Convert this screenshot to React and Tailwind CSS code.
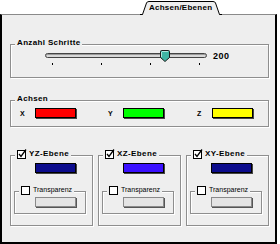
import React from 'react';

const Group = ({ className, label, children }) => (
    <div className={`relative border border-[#8e8e8e] shadow-[inset_1px_1px_0_#fff,1px_1px_0_#fff] ${className}`}>
        <div className="absolute left-[4px] -top-[8px] h-[11px] bg-[#eeeeee] px-[2px] flex items-center gap-[2px]">
            {label}
        </div>
        {children}
    </div>
);

const Check = ({ checked }) => (
    <svg width="10" height="10" viewBox="0 0 10 10" className="shrink-0">
        <rect x="0.5" y="1.5" width="8" height="8" fill="#fff" stroke="#000" />
        {checked && <path d="M2 5 L4 7.5 L9 0.5" fill="none" stroke="#000" strokeWidth="1.3" />}
    </svg>
);

const Swatch = ({ color }) => (
    <div className={`w-[41px] h-[10px] border border-black shadow-[1px_1px_0_#444] ${color}`} />
);

const Plane = ({ name, color }) => (
    <Group
        className="w-[83px] h-[71px]"
        label={
            <>
                <Check checked />
                <span className="text-[8px] font-bold tracking-[0.4px] leading-none">{name}</span>
            </>
        }
    >
        <div className="pl-[24px] pt-[7px]">
            <Swatch color={color} />
        </div>
        <Group
            className="ml-[3px] mt-[18px] w-[72px] h-[23px]"
            label={
                <>
                    <Check />
                    <span className="text-[7px] leading-none">Transparenz</span>
                </>
            }
        >
            <div className="pl-[20px] pt-[5px]">
                <div className="w-[41px] h-[10px] bg-[#e4e4e4] border border-[#8a8a8a] shadow-[1px_1px_0_#555]" />
            </div>
        </Group>
    </Group>
);

const App = () => {
    const ticks = [0, 1, 2, 3];

    return (
        <div className="w-[280px] h-[244px] bg-white text-black font-['Liberation_Sans',Arial,sans-serif] overflow-hidden">
            {/* Tab header */}
            <div className="h-[14px] flex">
                <div className="relative ml-[140px] w-[82px] h-[14px] z-10">
                    <svg width="82" height="16" viewBox="0 0 82 16" className="absolute left-0 top-0">
                        <path d="M2.5 16 L6.5 3 Q7 1.5 9 1.5 H73 Q75 1.5 75.5 3 L79.5 16 Z" fill="#eeeeee" />
                        <path d="M0 14.5 H2.5 L6.5 3 Q7 1.5 9 1.5 H73 Q75 1.5 75.5 3 L79.5 14.5 H82" fill="none" stroke="#000" />
                    </svg>
                    <span className="relative block pl-[9px] pt-[3px] text-[8px] font-bold leading-[10px] tracking-[0.25px]">
                        Achsen/Ebenen
                    </span>
                </div>
            </div>

            {/* Panel */}
            <div className="w-[277px] h-[230px] bg-[#eeeeee] border-t border-t-[#8a8a8a] border-l-2 border-r-2 border-b-2 border-l-black border-r-black border-b-black pl-[8px] pt-[29px]">
                {/* Anzahl Schritte */}
                <Group
                    className="w-[259px] h-[34px]"
                    label={<span className="text-[8px] font-bold leading-none tracking-[0.35px]">Anzahl Schritte</span>}
                >
                    <div className="flex items-start pl-[34px] pt-[8px]">
                        <div className="w-[162px]">
                            <div className="relative h-[5px] rounded-full border border-[#444] bg-[#d8d8d8] shadow-[inset_0_1px_0_#999]">
                                <svg width="12" height="13" viewBox="0 0 12 13" className="absolute left-[113px] -top-[4px]">
                                    <path d="M1.5 1.5 Q1.5 0.5 2.5 0.5 H9.5 Q10.5 0.5 10.5 1.5 V7.5 L6 11.5 L1.5 7.5 Z" fill="#3fb5a3" stroke="#1c1c1c" />
                                    <path d="M2.5 2 V7 M3 1.5 H9" stroke="#aee5dc" />
                                </svg>
                            </div>
                            <div className="flex justify-between px-[7px] mt-[5px]">
                                {ticks.map(t => (
                                    <div key={t} className="w-[1px] h-[2px] bg-black" />
                                ))}
                            </div>
                        </div>
                        <span className="ml-[6px] -mt-[2px] text-[9px] font-bold leading-[10px] tracking-[0.5px]">200</span>
                    </div>
                </Group>

                {/* Achsen */}
                <Group
                    className="w-[259px] h-[27px] mt-[22px]"
                    label={<span className="text-[8px] font-bold leading-none tracking-[0.35px]">Achsen</span>}
                >
                    <div className="flex pl-[9px] pt-[7px]">
                        {[
                            { l: 'X', c: 'bg-[#ff0000]', w: 'w-[88px]' },
                            { l: 'Y', c: 'bg-[#00ff00]', w: 'w-[89px]' },
                            { l: 'Z', c: 'bg-[#ffff00]', w: 'w-[60px]' },
                        ].map(a => (
                            <div key={a.l} className={`flex items-center ${a.w}`}>
                                <span className="w-[15px] text-[7px] font-bold leading-none">{a.l}</span>
                                <Swatch color={a.c} />
                            </div>
                        ))}
                    </div>
                </Group>

                {/* Ebenen */}
                <div className="flex gap-[5px] mt-[28px]">
                    <Plane name="YZ-Ebene" color="bg-[#0c0c8c]" />
                    <Plane name="XZ-Ebene" color="bg-[#3a10ff]" />
                    <Plane name="XY-Ebene" color="bg-[#0c0c8c]" />
                </div>
            </div>
        </div>
    );
};

export default App;
